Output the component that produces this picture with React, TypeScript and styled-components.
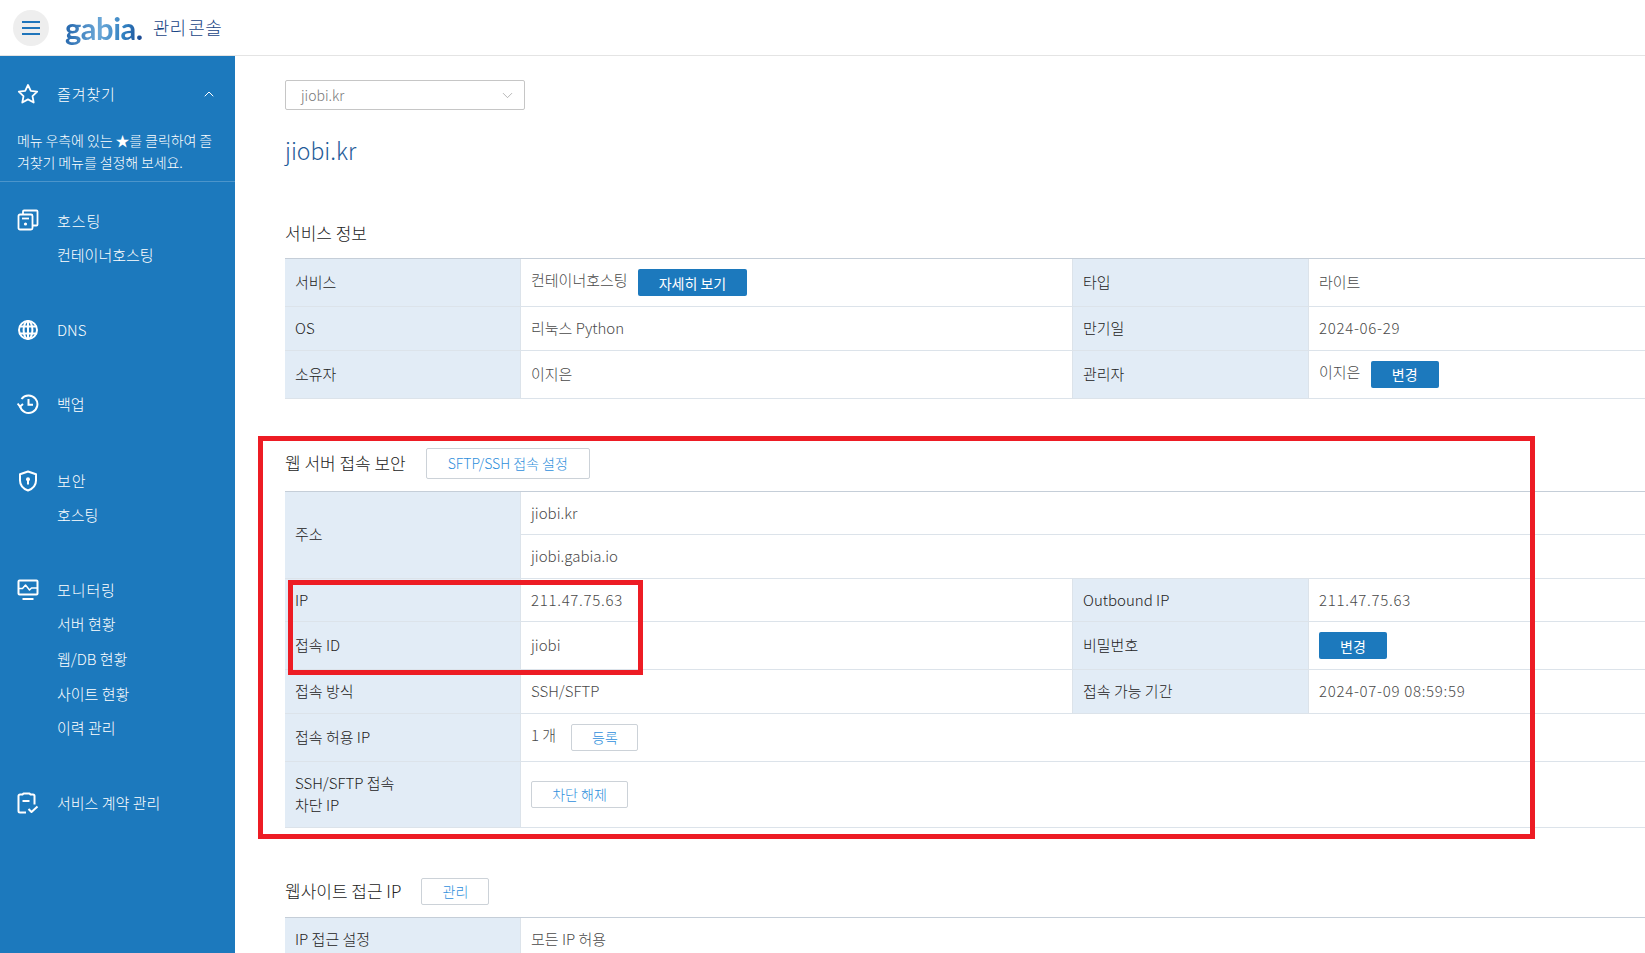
import React from "react";
import styled, { createGlobalStyle } from "styled-components";
import { ChevronDown, ChevronUp } from "lucide-react";

const GlobalStyle = createGlobalStyle`
  html, body {
    margin: 0;
    padding: 0;
    height: 953px;
    overflow: hidden;
    background: #fff;
  }
  * {
    box-sizing: border-box;
  }
  body {
    font-family: "Noto Sans CJK KR", "Noto Sans", sans-serif;
    font-size: 15px;
    color: #333;
  }
`;

function StarIcon() {
  return (
    <svg width="22" height="22" viewBox="0 0 22 22" fill="none" stroke="#fff" strokeWidth="1.8" strokeLinejoin="round">
      <path d="M11 2l2.8 5.900 6.400.8-4.700 4.400 1.200 6.400L11 16.400 5.300 19.500l1.200-6.400L1.800 8.700l6.400-.8z" />
    </svg>
  );
}

function HostingIcon() {
  return (
    <svg width="22" height="22" viewBox="0 0 22 22" fill="none" stroke="#fff" strokeWidth="1.8">
      <rect x="1.500" y="5.500" width="14" height="15" rx="1.500" />
      <path d="M6 5.500V2.500A1 1 0 0 1 7 1.500h12.500a1 1 0 0 1 1 1v13a1 1 0 0 1-1 1h-4" />
      <path d="M5 9.500h7" />
      <circle cx="8.500" cy="15" r="1.600" fill="#fff" stroke="none" />
    </svg>
  );
}

function GlobeIcon() {
  return (
    <svg width="22" height="22" viewBox="0 0 22 22" fill="none" stroke="#fff" strokeWidth="2">
      <circle cx="11" cy="11" r="9" />
      <ellipse cx="11" cy="11" rx="4.400" ry="9" />
      <path d="M11 2v18M2.500 7.500h17M2.500 14.500h17" />
    </svg>
  );
}

function BackupIcon() {
  return (
    <svg width="22" height="22" viewBox="0 0 22 22" fill="none" stroke="#fff" strokeWidth="2">
      <path d="M4.500 6A8.800 8.800 0 1 1 3 13" />
      <path d="M.6 10.500L3 13.500 6 11" />
      <path d="M11.500 6v5.800H16" />
    </svg>
  );
}

function ShieldIcon() {
  return (
    <svg width="22" height="22" viewBox="0 0 22 22" fill="none" stroke="#fff" strokeWidth="2" strokeLinejoin="round">
      <path d="M11 1.500l8 2.800v6.200c0 5-3.400 8.300-8 10-4.600-1.700-8-5-8-10V4.300z" />
      <circle cx="11" cy="9.200" r="2" fill="#fff" stroke="none" />
      <path d="M11 9.500v5" />
    </svg>
  );
}

function MonitorIcon() {
  return (
    <svg width="22" height="22" viewBox="0 0 22 22" fill="none" stroke="#fff" strokeWidth="2" strokeLinejoin="round">
      <rect x="1.500" y="1.500" width="19" height="14" rx="1" />
      <path d="M2 9.500h3.500l3-3.500 4 5 2-2H20" strokeWidth="1.500" />
      <path d="M5.500 20h11" />
    </svg>
  );
}

function ContractIcon() {
  return (
    <svg width="22" height="22" viewBox="0 0 22 22" fill="none" stroke="#fff" strokeWidth="2" strokeLinejoin="round">
      <path d="M9 20.500H3a1.500 1.500 0 0 1-1.500-1.500V4A1.500 1.500 0 0 1 3 2.500h2.500l1-1h6l1 1H16a1.500 1.500 0 0 1 1.500 1.500v8.500" />
      <path d="M5.500 9h7" />
      <path d="M11.500 17l3 3 6-5.500" />
    </svg>
  );
}

const sections = [
  { icon: <HostingIcon />, label: "호스팅", subs: ["컨테이너호스팅"], after: 40, wide: true },
  { icon: <GlobeIcon />, label: "DNS", subs: [], after: 38.75 },
  { icon: <BackupIcon />, label: "백업", subs: [], after: 42 },
  { icon: <ShieldIcon />, label: "보안", subs: ["호스팅"], after: 39.25, wide: true },
  { icon: <MonitorIcon />, label: "모니터링", subs: ["서버 현황", "웹/DB 현황", "사이트 현황", "이력 관리"], after: 39.25, wide: true },
  { icon: <ContractIcon />, label: "서비스 계약 관리", subs: [], after: 0 },
];

function App() {
  return (
    <>
      <GlobalStyle />
      <Page>
        <Header>
          <MenuButton>
            <span />
            <span />
            <span />
          </MenuButton>
          <Logo>gabia.</Logo>
          <ConsoleName>관리 콘솔</ConsoleName>
        </Header>
        <Body>
          <Sidebar>
            <Favorites>
              <NavRow>
                <StarIcon />
                <NavLabel $wide>즐겨찾기</NavLabel>
                <FoldIcon>
                  <ChevronUp size={16} strokeWidth={1.5} color="#fff" />
                </FoldIcon>
              </NavRow>
              <FavoritesHint>메뉴 우측에 있는 ★를 클릭하여 즐겨찾기 메뉴를 설정해 보세요.</FavoritesHint>
            </Favorites>
            <NavList>
              {sections.map((s) => (
                <NavGroup key={s.label} $after={s.after}>
                  <NavRow>
                    {s.icon}
                    <NavLabel $wide={s.wide}>{s.label}</NavLabel>
                  </NavRow>
                  {s.subs.map((sub) => (
                    <SubItem key={sub}>{sub}</SubItem>
                  ))}
                </NavGroup>
              ))}
            </NavList>
          </Sidebar>
          <Main>
            <DomainSelect>
              jiobi.kr
              <ChevronDown size={17} strokeWidth={1} color="#999" />
            </DomainSelect>
            <DomainTitle>jiobi.kr</DomainTitle>

            <SectionHead $top={52}>
              <SectionTitle>서비스 정보</SectionTitle>
            </SectionHead>
            <InfoTable>
              <Cols />
              <tbody>
                <tr>
                  <Th>서비스</Th>
                  <Td>
                    컨테이너호스팅 <FillButton $width={109} $gap={7}>자세히 보기</FillButton>
                  </Td>
                  <Th>타입</Th>
                  <Td>라이트</Td>
                </tr>
                <tr>
                  <Th>OS</Th>
                  <Td>리눅스 Python</Td>
                  <Th>만기일</Th>
                  <Td>
                    <Num>2024-06-29</Num>
                  </Td>
                </tr>
                <tr>
                  <Th>소유자</Th>
                  <Td>이지은</Td>
                  <Th>관리자</Th>
                  <Td>
                    이지은 <FillButton $width={68} $gap={7}>변경</FillButton>
                  </Td>
                </tr>
              </tbody>
            </InfoTable>

            <SectionHead $top={49}>
              <SectionTitle>웹 서버 접속 보안</SectionTitle>
              <LineButton $width={164} $height={31}>SFTP/SSH 접속 설정</LineButton>
            </SectionHead>
            <InfoTable>
              <Cols />
              <tbody>
                <tr>
                  <Th rowSpan={2}>주소</Th>
                  <Td colSpan={3}>jiobi.kr</Td>
                </tr>
                <tr>
                  <Td colSpan={3}>jiobi.gabia.io</Td>
                </tr>
                <tr>
                  <Th>IP</Th>
                  <Td>
                    <Num>211.47.75.63</Num>
                  </Td>
                  <Th>Outbound IP</Th>
                  <Td>
                    <Num>211.47.75.63</Num>
                  </Td>
                </tr>
                <tr>
                  <Th>접속 ID</Th>
                  <Td>jiobi</Td>
                  <Th>비밀번호</Th>
                  <Td>
                    <FillButton $width={68} $gap={0}>변경</FillButton>
                  </Td>
                </tr>
                <tr>
                  <Th>접속 방식</Th>
                  <Td>SSH/SFTP</Td>
                  <Th>접속 가능 기간</Th>
                  <Td>
                    <Num>2024-07-09 08:59:59</Num>
                  </Td>
                </tr>
                <tr>
                  <Th>접속 허용 IP</Th>
                  <Td colSpan={3}>
                    1 개 <LineButton $width={67} $gap={12}>등록</LineButton>
                  </Td>
                </tr>
                <tr>
                  <Th>
                    SSH/SFTP 접속
                    <br />
                    차단 IP
                  </Th>
                  <Td colSpan={3}>
                    <LineButton $width={97} $gap={0}>차단 해제</LineButton>
                  </Td>
                </tr>
              </tbody>
            </InfoTable>

            <SectionHead $top={50}>
              <SectionTitle>웹사이트 접근 IP</SectionTitle>
              <LineButton $width={68}>관리</LineButton>
            </SectionHead>
            <InfoTable>
              <Cols />
              <tbody>
                <tr>
                  <Th>IP 접근 설정</Th>
                  <Td colSpan={3}>모든 IP 허용</Td>
                </tr>
              </tbody>
            </InfoTable>

            <RedOutline $left={23} $top={380} $width={1277} $height={403} />
            <RedOutline $left={53} $top={524} $width={355} $height={95} />
          </Main>
        </Body>
      </Page>
    </>
  );
}

function Cols() {
  return (
    <colgroup>
      <col style={{ width: 236 }} />
      <col style={{ width: 551 }} />
      <col style={{ width: 237 }} />
      <col />
    </colgroup>
  );
}

const Page = styled.div`
  width: 1645px;
  height: 953px;
  display: flex;
  flex-direction: column;
  overflow: hidden;
`;

const Header = styled.header`
  height: 56px;
  flex-shrink: 0;
  display: flex;
  align-items: center;
  padding-left: 13px;
  border-bottom: 1px solid #e4e4e4;
`;

const MenuButton = styled.div`
  width: 36px;
  height: 36px;
  border-radius: 50%;
  background: #eee;
  display: flex;
  flex-direction: column;
  align-items: center;
  justify-content: center;
  gap: 4px;
  span {
    width: 18px;
    height: 2px;
    background: #1f75bb;
  }
`;

const Logo = styled.div`
  margin-left: 16px;
  font-family: "Lato", "Noto Sans", sans-serif;
  font-weight: 700;
  font-size: 31px;
  line-height: 40px;
  letter-spacing: -0.5px;
  background: linear-gradient(100deg, #1c5fa8 0%, #6ba8d8 45%, #2f7fc0 75%, #173f8a 100%);
  -webkit-background-clip: text;
  background-clip: text;
  color: transparent;
`;

const ConsoleName = styled.div`
  margin: -2px 0 0 10px;
  font-size: 18px;
  font-weight: 300;
  color: #1a4585;
  letter-spacing: 0.2px;
  word-spacing: -2px;
`;

const Body = styled.div`
  flex: 1;
  display: flex;
  min-height: 0;
`;

const Sidebar = styled.aside`
  width: 235px;
  flex-shrink: 0;
  background: #1c79bd;
  color: #fff;
`;

const Favorites = styled.div`
  padding: 20px 17px 0;
  height: 126px;
  border-bottom: 1px solid #4c95cb;
`;

const NavRow = styled.div`
  height: 35px;
  display: flex;
  align-items: center;
  gap: 18px;
`;

const NavLabel = styled.span<{ $wide?: boolean }>`
  font-size: 15px;
  font-weight: 300;
  letter-spacing: ${(p) => (p.$wide ? 0.9 : 0)}px;
`;

const FoldIcon = styled.span`
  margin-left: auto;
  display: flex;
  margin-right: 1px;
`;

const FavoritesHint = styled.p`
  margin: 19px 0 0;
  font-size: 14px;
  font-weight: 300;
  line-height: 21.500px;
  letter-spacing: -0.1px;
  width: 198px;
`;

const NavList = styled.nav`
  padding: 20.500px 17px 0;
`;

const NavGroup = styled.div<{ $after: number }>`
  margin-bottom: ${(p) => p.$after}px;
`;

const SubItem = styled.div`
  height: 34.750px;
  line-height: 33.500px;
  padding-left: 40px;
  font-size: 15px;
  font-weight: 300;
`;

const Main = styled.main`
  position: relative;
  flex: 1;
  min-width: 0;
  padding: 24px 0 0 50px;
`;

const DomainSelect = styled.div`
  width: 240px;
  height: 30px;
  padding: 0 8px 0 15px;
  display: flex;
  align-items: center;
  justify-content: space-between;
  border: 1px solid #c6c6c6;
  border-radius: 2px;
  font-size: 14px;
  font-weight: 300;
  color: #777;
`;

const DomainTitle = styled.h1`
  margin: 22px 0 0;
  font-size: 23px;
  line-height: 36px;
  font-weight: 300;
  color: #1f5c99;
`;

const SectionHead = styled.div<{ $top: number }>`
  display: flex;
  align-items: center;
  gap: 14px;
  margin-top: ${(p) => p.$top}px;
  margin-bottom: 12px;
`;

const SectionTitle = styled.h2`
  margin: 0;
  font-size: 17px;
  line-height: 26px;
  font-weight: 300;
  color: #222;
`;

const InfoTable = styled.table`
  width: 100%;
  table-layout: fixed;
  border-collapse: separate;
  border-spacing: 0;
  border-top: 1px solid #c5ced8;
`;

const Th = styled.th`
  padding: 10px;
  background: #e2ecf6;
  border-bottom: 1px solid #dce3ea;
  border-left: 1px solid #dce3ea;
  border-right: 1px solid #dce3ea;
  text-align: left;
  font-weight: 300;
  font-size: 15px;
  line-height: 22.500px;
  color: #222;
  &:first-child {
    border-left: 0;
  }
`;

const Td = styled.td`
  padding: 10px;
  border-bottom: 1px solid #dce3ea;
  font-size: 15px;
  font-weight: 300;
  line-height: 22.500px;
  color: #4a4a4a;
  vertical-align: middle;
`;

const Num = styled.span`
  letter-spacing: 0.700px;
`;

const FillButton = styled.button<{ $width: number; $gap?: number }>`
  width: ${(p) => p.$width}px;
  height: 27px;
  margin-left: ${(p) => p.$gap ?? 6}px;
  padding: 0;
  display: inline-block;
  vertical-align: top;
  border: 0;
  border-radius: 2px;
  background: #1c79bd;
  color: #fff;
  font-family: inherit;
  font-size: 14px;
`;

const LineButton = styled.button<{ $width: number; $height?: number; $gap?: number }>`
  width: ${(p) => p.$width}px;
  height: ${(p) => p.$height ?? 27}px;
  margin-left: ${(p) => p.$gap ?? 6}px;
  padding: 0;
  display: inline-block;
  vertical-align: top;
  border: 1px solid #ccd2d8;
  border-radius: 2px;
  background: #fff;
  color: #2f8fdc;
  font-family: inherit;
  font-size: 14px;
  font-weight: 300;
`;

const RedOutline = styled.div<{ $left: number; $top: number; $width: number; $height: number }>`
  position: absolute;
  left: ${(p) => p.$left}px;
  top: ${(p) => p.$top}px;
  width: ${(p) => p.$width}px;
  height: ${(p) => p.$height}px;
  border: 5px solid #ed1c24;
  pointer-events: none;
`;

export default App;
